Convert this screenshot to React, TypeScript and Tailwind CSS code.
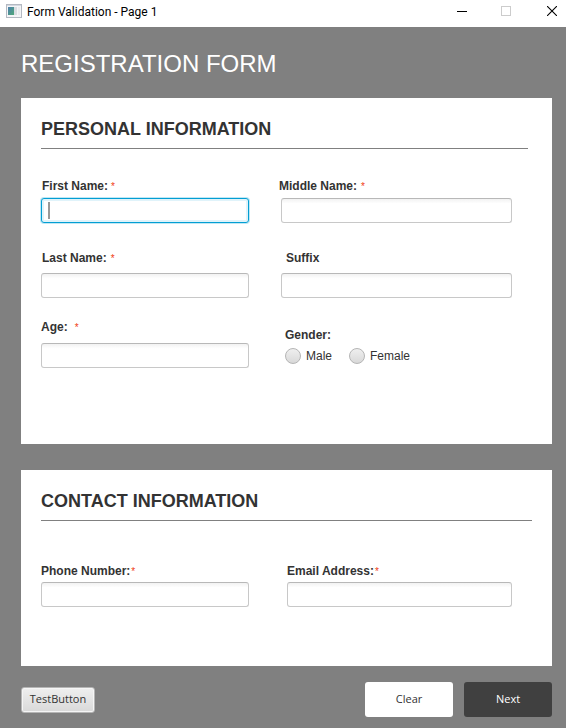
import type { ReactNode } from "react";

type FieldProps = {
  id: string;
  label: string;
  required?: boolean;
  type?: string;
  focused?: boolean;
  labelClass?: string;
  starClass?: string;
};

const inputBase =
  "block h-[25px] w-full rounded-[3px] border bg-white px-2 text-xs text-[#333333] outline-none";
const inputIdle =
  "border-[#c8c8c8] border-t-[#b8b8b8] bg-linear-to-b from-[#f2f2f2] to-white to-20%";
const inputFocused =
  "border-[#039ed3] shadow-[0_0_0_1px_#c0e7f4,inset_0_0_0_2px_#e0f3fa] caret-transparent";

function Star({ className = "ml-1" }: { className?: string }) {
  return (
    <span aria-hidden="true" className={`pt-0.5 text-[10px] leading-4 font-normal text-[#f03c14] ${className}`}>
      *
    </span>
  );
}

function Field({
  id,
  label,
  required = false,
  type = "text",
  focused = false,
  labelClass = "mb-1",
  starClass,
}: FieldProps) {
  return (
    <div>
      <label htmlFor={id} className={`flex h-4 items-center text-xs leading-4 font-bold ${labelClass}`}>
        {label}
        {required && <Star className={starClass} />}
      </label>
      <div className="relative">
        <input
          id={id}
          type={type}
          required={required}
          className={`${inputBase} ${focused ? inputFocused : inputIdle}`}
        />
        {focused && <span className="absolute top-1 left-[7px] h-[17px] w-0.5 bg-[#999999]" />}
      </div>
    </div>
  );
}

function Radio({ id, label }: { id: string; label: string }) {
  return (
    <div className="flex items-center gap-[5px]">
      <input
        id={id}
        type="radio"
        name="gender"
        className="size-4 appearance-none rounded-full border border-[#b5b5b5] bg-linear-to-b from-[#efefef] to-[#d9d9d9]"
      />
      <label htmlFor={id} className="text-xs leading-4">
        {label}
      </label>
    </div>
  );
}

function PanelTitle({ children, className = "" }: { children: ReactNode; className?: string }) {
  return (
    <h2 className={`border-b border-[#808080] pb-[7px] text-lg leading-6 font-bold ${className}`}>
      {children}
    </h2>
  );
}

function TitleBar() {
  return (
    <header className="flex h-[27px] items-start bg-white pl-1.5 font-[Roboto,'Noto_Sans',sans-serif] text-black">
      <svg width="16" height="14" viewBox="0 0 16 14" className="mt-1" aria-hidden="true">
        <defs>
          <linearGradient id="screen" x1="0" y1="0" x2="1" y2="1">
            <stop offset="0" stopColor="#4d7fae" />
            <stop offset="1" stopColor="#4fa878" />
          </linearGradient>
        </defs>
        <rect x="0.5" y="0.5" width="15" height="13" fill="#f4f5f7" stroke="#b4b9c2" />
        <path d="M1 1.5h14" stroke="#d3d8e0" />
        <rect x="2" y="3" width="6" height="8" fill="url(#screen)" />
        <rect x="8" y="3" width="3" height="8" fill="#d9dde1" />
        <rect x="12" y="3" width="2" height="8" fill="#e9ebee" />
      </svg>
      <h1 className="ml-[5px] flex-1 text-xs leading-6">Form Validation - Page 1</h1>
      <div className="flex">
        <button type="button" aria-label="Minimize" className="flex h-[22px] w-[45px] items-center justify-center">
          <svg width="10" height="11" viewBox="0 0 10 11" shapeRendering="crispEdges">
            <path d="M0 5.5h10" stroke="#000" />
          </svg>
        </button>
        <button type="button" disabled aria-label="Maximize" className="flex h-[22px] w-11 items-center justify-center">
          <svg width="10" height="10" viewBox="0 0 10 10">
            <rect x="0.5" y="0.5" width="9" height="9" fill="none" stroke="#cccccc" />
          </svg>
        </button>
        <button type="button" aria-label="Close" className="flex h-[22px] w-[38px] items-center justify-end pr-[9px]">
          <svg width="10" height="10" viewBox="0 0 10 10">
            <path d="M0 0l10 10M10 0L0 10" stroke="#000" strokeWidth="1.1" />
          </svg>
        </button>
      </div>
    </header>
  );
}

export default function App() {
  return (
    <div className="flex min-h-screen flex-col bg-[#808080] font-['Liberation_Sans',Arial,sans-serif] text-[#333333]">
      <TitleBar />
      <form className="flex flex-col pt-[21px] pr-3.5 pb-[11px] pl-[21px]">
        <h1 className="mb-[18px] text-2xl leading-8 text-white">REGISTRATION FORM</h1>

        <section className="mb-[26px] bg-white pt-[19px] pb-[76px] pl-5">
          <PanelTitle className="mr-6">PERSONAL INFORMATION</PanelTitle>
          <div className="mt-[29px] mr-10 grid grid-cols-[208fr_231fr] gap-x-8">
            <Field id="first-name" label="First Name:" required focused labelClass="mb-1 pl-px" starClass="ml-[3px]" />
            <Field id="middle-name" label="Middle Name:" required labelClass="mb-1 -ml-0.5" />
          </div>
          <div className="mt-[27px] mr-10 grid grid-cols-[208fr_231fr] gap-x-8">
            <Field id="last-name" label="Last Name:" required labelClass="mb-[7px] pl-px" />
            <Field id="suffix" label="Suffix" labelClass="mb-[7px] pl-[5px]" />
          </div>
          <div className="mt-[21px] mr-10 grid grid-cols-[208fr_231fr] gap-x-8">
            <Field id="age" label="Age:" required labelClass="mb-2" starClass="ml-[7px]" />
            <fieldset className="pt-2 pl-1">
              <legend className="float-left w-full text-xs leading-4 font-bold">Gender:</legend>
              <div className="clear-both flex gap-[17px] pt-[5px]">
                <Radio id="male" label="Male" />
                <Radio id="female" label="Female" />
              </div>
            </fieldset>
          </div>
        </section>

        <section className="mb-4 bg-white pt-[19px] pb-[59px] pl-5">
          <PanelTitle className="mr-5">CONTACT INFORMATION</PanelTitle>
          <div className="mt-[42px] mr-10 grid grid-cols-[208fr_225fr] gap-x-[38px]">
            <Field id="phone" label="Phone Number:" type="tel" required labelClass="mb-[3px]" starClass="ml-px" />
            <Field id="email" label="Email Address:" type="email" required labelClass="mb-[3px]" starClass="ml-px" />
          </div>
        </section>

        <div className="flex items-center font-['Open_Sans','Noto_Sans',sans-serif] text-[11px]">
          <button
            type="button"
            className="mr-auto h-[26px] w-[74px] rounded-[3px] border border-[#b5b5b5] bg-linear-to-b from-[#efefef] to-[#d9d9d9] shadow-[inset_0_0_0_1px_#f5f5f5]"
          >
            TestButton
          </button>
          <button type="reset" className="mr-[11px] h-[35px] w-[88px] rounded-[3px] bg-white">
            Clear
          </button>
          <button type="button" className="h-[35px] w-[88px] rounded-[3px] bg-[#404040] text-white">
            Next
          </button>
        </div>
      </form>
    </div>
  );
}
